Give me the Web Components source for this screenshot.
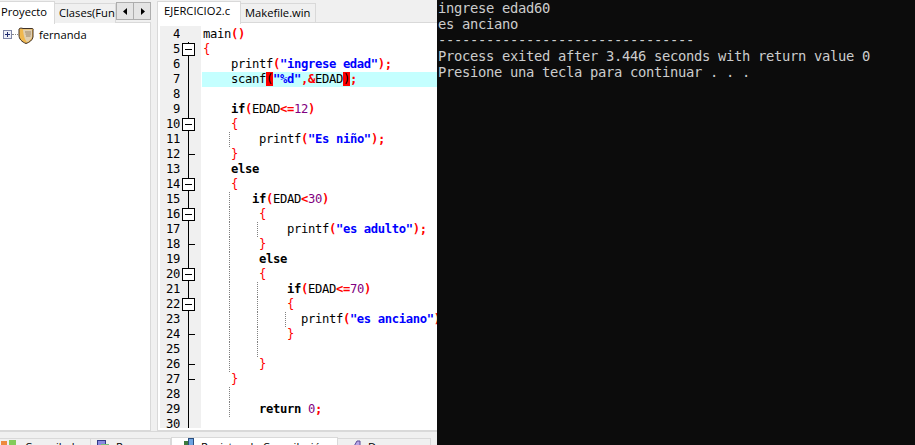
<!DOCTYPE html>
<html>
<head>
<meta charset="utf-8">
<title>EJERCICIO2.c</title>
<style>
html,body{margin:0;padding:0;height:445px;overflow:hidden;background:#0c0c0c;}
body{display:flex;font-family:"Open Sans","Liberation Sans",sans-serif;}
</style>
</head>
<body>
<ide-window>
    <project-panel slot="left"></project-panel>
    <code-editor slot="right"></code-editor>
    <bottom-tabs slot="bottom"></bottom-tabs>
</ide-window>
<console-window>ingrese edad60
es anciano
--------------------------------
Process exited after 3.446 seconds with return value 0
Presione una tecla para continuar . . .</console-window>

<script>
class IdeWindow extends HTMLElement{
    constructor(){
        super();
        this.shadowDOM=this.attachShadow({mode:"open"});
        this.shadowDOM.innerHTML=`
        <style>
        :host{display:flex;flex-direction:column;width:437px;height:445px;background:#f0f0f0;overflow:hidden;flex:none;}
        .top{display:flex;height:431px;flex:none;}
        </style>
        <div class="top"><slot name="left"></slot><slot name="right"></slot></div>
        <slot name="bottom"></slot>
        `;
    }
}
customElements.define("ide-window",IdeWindow);

class ProjectPanel extends HTMLElement{
    constructor(){
        super();
        this.shadowDOM=this.attachShadow({mode:"open"});
        this.shadowDOM.innerHTML=`
        <style>
        :host{display:flex;flex-direction:column;width:152px;margin-right:5px;flex:none;font:11.2px "Open Sans",sans-serif;color:#000;}
        .tabs{display:flex;height:23px;padding-top:1px;box-sizing:border-box;position:relative;}
        .tab{box-sizing:border-box;white-space:nowrap;overflow:hidden;}
        .active{width:55px;height:23px;background:#fff;border-top:1px solid #d9d9d9;border-right:1px solid #d9d9d9;padding:2px 0 0 1px;position:relative;z-index:1;}
        .other{width:61px;height:20px;margin-top:2px;background:#f0f0f0;border-top:1px solid #d9d9d9;border-right:1px solid #d9d9d9;padding:1px 0 0 4px;}
        .spin{display:flex;margin-top:1px;}
        .spin button{width:18px;height:18px;margin:0;padding:0;background:#e4e4e4;border:1px solid #adadad;display:flex;align-items:center;justify-content:center;}
        .spin button+button{margin-left:-1px;}
        .pane{flex:1;background:#fff;border:1px solid #d9d9d9;border-left:0;margin:-1px 1px 0 0;}
        .node{display:flex;align-items:center;height:17px;margin-top:3px;padding-left:3px;}
        .exp{width:9px;height:9px;flex:none;}
        .dots{width:6px;height:0;border-top:1px dotted #8a8a8a;flex:none;}
        .ico{flex:none;margin-top:1px;}
        .name{margin-left:5px;}
        </style>
        <div class="tabs">
            <div class="tab active">Proyecto</div>
            <div class="tab other">Clases(Funciones)</div>
            <div class="spin">
                <button><svg width="5" height="7"><path d="M4 0v7L0 3.500z" fill="#000"/></svg></button>
                <button><svg width="5" height="7"><path d="M1 0v7L5 3.500z" fill="#000"/></svg></button>
            </div>
        </div>
        <div class="pane">
            <div class="node">
                <svg class="exp" viewBox="0 0 9 9"><rect x=".5" y=".5" width="8" height="8" fill="#eef0f8" stroke="#7f86a8"/><path d="M2 4.500h5M4.500 2v5" stroke="#202c70"/></svg>
                <span class="dots"></span>
                <svg class="ico" width="16" height="17" viewBox="0 0 16 17">
                    <path d="M1 2C2 .8 3.500 1 5 1.500h9c1 0 1.500.5 1 1.500v7c-.5 3-3.500 5.500-7 6.500C4 15 .8 12 1 8z" fill="#f0b84e" stroke="#3f3128"/>
                    <path d="M5 2.500h9V10c-1 2.500-3 4-5 5.200C7 13 5.500 9 5 2.500z" fill="#e0cfb0"/>
                    <path d="M7 5h6M7.500 7h5.500M8 9h4.500" stroke="#9a8468"/>
                </svg>
                <span class="name">fernanda</span>
            </div>
        </div>
        `;
    }
}
customElements.define("project-panel",ProjectPanel);

const SOURCE=[
    [4,"main()"],
    [5,"{","box"],
    [6,"    printf(\"ingrese edad\");"],
    [7,"    scanf(\"%d\",&EDAD);"],
    [8,""],
    [9,"    if(EDAD<=12)"],
    [10,"    {","box"],
    [11,"        printf(\"Es niño\");"],
    [12,"    }","tick"],
    [13,"    else"],
    [14,"    {","box"],
    [15,"       if(EDAD<30)"],
    [16,"        {","box"],
    [17,"            printf(\"es adulto\");"],
    [18,"        }","tick"],
    [19,"        else"],
    [20,"        {","box"],
    [21,"            if(EDAD<=70)"],
    [22,"            {","box"],
    [23,"              printf(\"es anciano\");"],
    [24,"            }","tick"],
    [25,""],
    [26,"        }","tick"],
    [27,"    }","tick"],
    [28,""],
    [29,"        return 0;"],
    [30,""]
];
// which lines carry the dotted indent guides, by pixel offset from the code start
const GUIDES={
    27:[11,15,16,17,18,19,20,21,22,23,24,25,26,28,29],
    55:[17,21,22,23,24,25],
    83:[23]
};

class CodeEditor extends HTMLElement{
    constructor(){
        super();
        this.shadowDOM=this.attachShadow({mode:"open"});
        this.shadowDOM.innerHTML=`
        <style>
        :host{display:flex;flex-direction:column;flex:1;min-width:0;font:11.2px "Open Sans",sans-serif;color:#000;}
        .tabs{display:flex;height:23px;flex:none;padding-top:1px;box-sizing:border-box;}
        .tab{box-sizing:border-box;white-space:nowrap;}
        .active{width:84px;height:23px;background:#fff;border:1px solid #d9d9d9;border-bottom:0;padding:1px 0 0 6px;position:relative;z-index:1;}
        .other{width:75px;height:20px;margin-top:2px;background:#f0f0f0;border:1px solid #d9d9d9;border-left:0;padding:1px 0 0 4px;}
        .pane{flex:1;min-height:0;background:#fff;border:1px solid #d9d9d9;border-right:0;margin-top:-1px;padding:3px 0 2px 2px;overflow:hidden;}
        .lines{height:100%;overflow:hidden;}
        .lines::before{content:"";display:block;width:41px;height:1px;background:#f0f0f0;}
        .row{display:flex;height:15px;font:12.2px/15px "DejaVu Sans Mono",monospace;letter-spacing:-.344px;white-space:pre;}
        .num{width:20px;flex:none;background:#f0f0f0;text-align:right;color:#000;}
        .fold{width:21px;flex:none;background:#f0f0f0;display:block;}
        .code{flex:1;margin-left:1px;padding-left:1px;position:relative;}
        .hl{background:#c4ffff;}
        .kw{font-weight:bold;color:#000;}
        .str{font-weight:bold;color:#0000ff;}
        .numv{color:#800080;}
        .sym{font-weight:bold;color:#ff0000;}
        .brace{color:#ff0000;}
        .match{background:#ff0000;color:#000;}
        .guide{position:absolute;top:0;bottom:0;width:0;border-left:1px dotted #808080;}
        </style>
        <div class="tabs">
            <div class="tab active">EJERCICIO2.c</div>
            <div class="tab other">Makefile.win</div>
        </div>
        <div class="pane"><div class="lines"></div></div>
        `;
    }

    connectedCallback(){
        this.render();
    }

    foldIcon(kind){
        let marks="";
        if(kind=="box") marks=`<rect x="2.500" y="1.500" width="12" height="12" fill="#fff" stroke="#000"/><path d="M5 7.500h7" stroke="#000"/>`;
        if(kind=="tick") marks=`<path d="M8 7.500h7" stroke="#000"/>`;
        return `<svg class="fold" width="21" height="15" viewBox="0 0 21 15"><path d="M8.500 0v15" stroke="#000"/>${marks}</svg>`;
    }

    tokens(text,line){
        const re=/("[^"]*")|\b(if|else|return)\b|(\d+)|([(){};,&<=])|(\s+|[^\s"(){};,&<=]+)/g;
        const parts=[...text.matchAll(re)];
        return parts.map((m,i)=>{
            if(m[1]) return `<span class="str">${m[1]}</span>`;
            if(m[2]) return `<span class="kw">${m[2]}</span>`;
            if(m[3]) return `<span class="numv">${m[3]}</span>`;
            if(m[4]){
                // line 7 has the caret on its bracket pair
                const isMatch=line==7&&((m[4]=="("&&i<4)||m[4]==")");
                const cls=isMatch?"match":(m[4]=="{"||m[4]=="}")?"brace":"sym";
                return `<span class="${cls}">${m[4]}</span>`;
            }
            return m[5];
        }).join("");
    }

    render(){
        const rows=SOURCE.map(([n,text,kind])=>{
            let guides="";
            for(const x in GUIDES){
                if(GUIDES[x].includes(n)) guides+=`<i class="guide" style="left:${x}px"></i>`;
            }
            // the fold line starts at line 5, line 4 has an empty margin
            const fold=n==4?`<svg class="fold" width="21" height="15"></svg>`:this.foldIcon(kind);
            return `<div class="row"><div class="num">${n}</div>${fold}<div class="code ${n==7?"hl":""}">${guides}${this.tokens(text,n)}</div></div>`;
        }).join("");
        this.shadowDOM.querySelector(".lines").innerHTML=rows;
    }
}
customElements.define("code-editor",CodeEditor);

class BottomTabs extends HTMLElement{
    constructor(){
        super();
        this.shadowDOM=this.attachShadow({mode:"open"});
        this.shadowDOM.innerHTML=`
        <style>
        :host{display:flex;flex:1;padding-top:5px;box-sizing:border-box;font:11.2px "Open Sans",sans-serif;color:#000;min-height:0;align-items:flex-start;border-top:1px solid #d9d9d9;}
        .tab{box-sizing:border-box;display:flex;align-items:flex-start;white-space:nowrap;height:20px;margin-top:1px;border-top:1px solid #d9d9d9;border-right:1px solid #d9d9d9;background:#f0f0f0;flex:none;gap:6px;}
        .tab span{margin-top:0;}
        .tab svg{margin-top:1px;}
        .active{margin-top:0;background:#fff;border:1px solid #d9d9d9;}
        .active svg{margin-top:0;}
        .active span{margin-top:1px;}
        </style>
        <div class="tab" style="width:91px;padding-left:1px">
            <svg width="16" height="16"><rect x="0" y="1" width="6" height="15" fill="#ee8a3c"/><rect x="8" y="0" width="7" height="16" fill="#82cc5a"/></svg>
            <span style="margin-left:2px">Compilador</span>
        </div>
        <div class="tab" style="width:80px;padding-left:6px">
            <svg width="13" height="16"><rect x=".5" y=".5" width="8" height="15" fill="#8a8ae0" stroke="#333a88"/><rect x="4" y="4" width="8" height="12" fill="#7cc47c"/></svg>
            <span>Recursos</span>
        </div>
        <div class="tab active" style="width:167px;padding-left:7px">
            <svg width="16" height="16"><rect x="0" y="7" width="5" height="9" fill="#4f9a4f"/><rect x="5" y="3" width="5" height="13" fill="#3d7a3d"/><rect x="9.500" y=".5" width="5" height="15" fill="#6ea4e2" stroke="#2b4f80"/></svg>
            <span>Registro de Compilación</span>
        </div>
        <div class="tab" style="width:93px;padding-left:10px">
            <svg width="14" height="16"><path d="M1 15 9 1h3v14z" fill="#b9a6e8" stroke="#5a4a96"/></svg>
            <span>Depurar</span>
        </div>
        `;
    }
}
customElements.define("bottom-tabs",BottomTabs);

class ConsoleWindow extends HTMLElement{
    constructor(){
        super();
        this.shadowDOM=this.attachShadow({mode:"open"});
        this.shadowDOM.innerHTML=`
        <style>
        :host{display:block;flex:1;background:#0c0c0c;color:#cccccc;padding-left:1px;overflow:hidden;}
        .text{font:13.8px/16px "DejaVu Sans Mono",monospace;letter-spacing:-.308px;white-space:pre;}
        </style>
        <div class="text"><slot></slot></div>
        `;
    }
}
customElements.define("console-window",ConsoleWindow);
</script>
</body>
</html>
